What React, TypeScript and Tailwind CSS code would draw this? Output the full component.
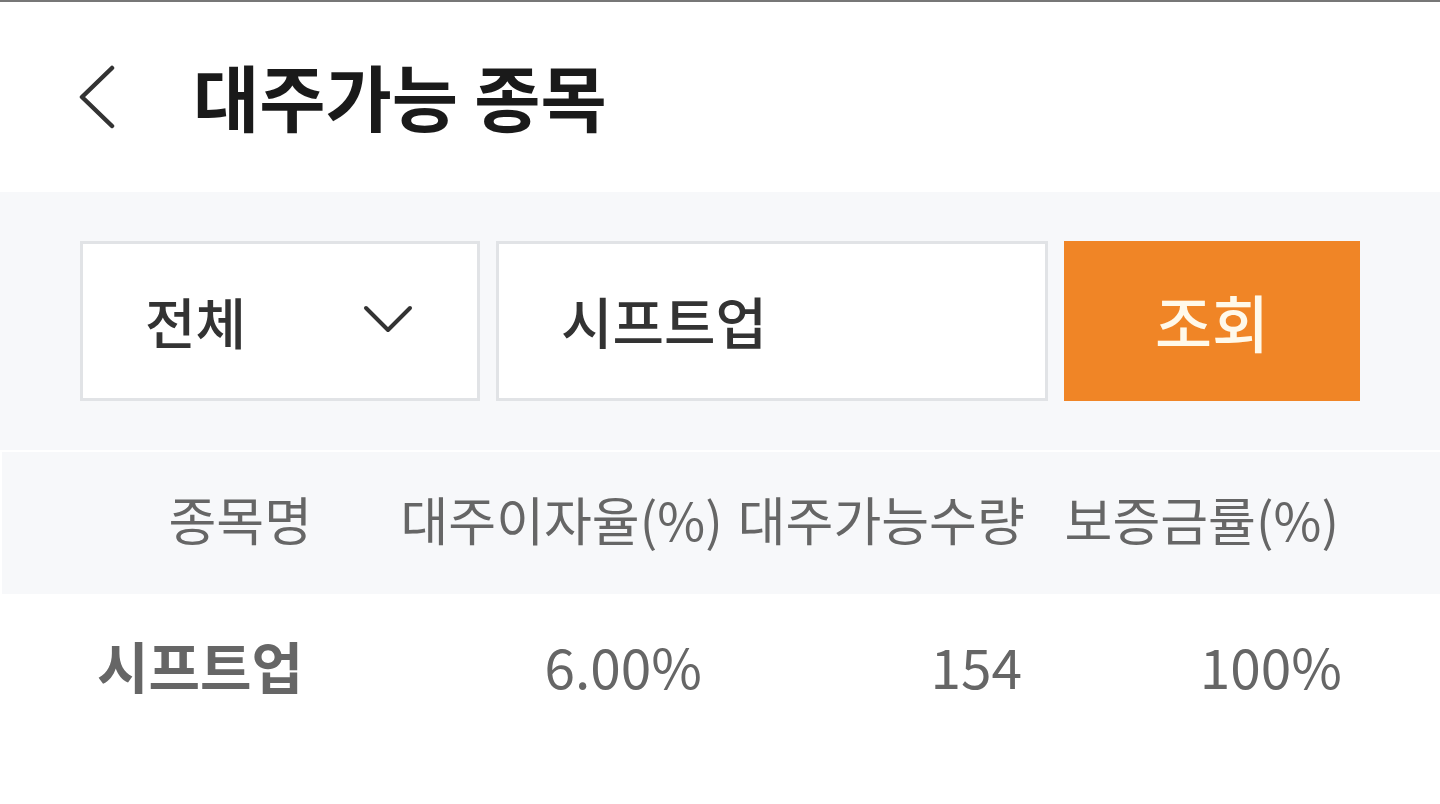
const font = { fontFamily: '"Noto Sans CJK KR", "Noto Sans", sans-serif' };

function BackIcon() {
  return (
    <svg width="40" height="64" viewBox="0 0 40 64" fill="none">
      <path d="M34 3L4 32L34 61" stroke="#333" strokeWidth="4.5" strokeLinecap="round" strokeLinejoin="round" />
    </svg>
  );
}

function ChevronDown() {
  return (
    <svg width="50" height="30" viewBox="0 0 50 30" fill="none">
      <path d="M3 4L25 26L47 4" stroke="#333" strokeWidth="4" strokeLinecap="round" strokeLinejoin="round" />
    </svg>
  );
}

const rows = [{ name: '시프트업', rate: '6.00%', qty: '154', margin: '100%' }];

export default function App() {
  return (
    <div className="w-[1440px] h-[804px] bg-white overflow-hidden" style={font}>
      <div className="h-[2px] bg-[#777]" />
      <header className="h-[190px] flex items-center pl-[78px]">
        <BackIcon />
        <h1 className="ml-[75px] text-[72px] font-bold text-[#1a1a1a] leading-none -mt-[4px]">대주가능 종목</h1>
      </header>

      <section className="bg-[#f7f8fa] px-[80px] py-[49px]">
        <div className="flex gap-4 h-[160px]">
          <div className="w-[400px] bg-white border-[3px] border-[#e1e3e6] flex items-center justify-between pl-[62px] pr-[64px]">
            <span className="text-[55px] font-medium text-[#333] leading-none -mt-[2px]">전체</span>
            <span className="-mt-[4px]">
              <ChevronDown />
            </span>
          </div>
          <div className="flex-1 bg-white border-[3px] border-[#e1e3e6] flex items-center pl-[62px]">
            <span className="text-[56px] font-medium text-[#333] leading-none -mt-[2px]">시프트업</span>
          </div>
          <button className="w-[296px] bg-[#f08526] flex items-center justify-center text-[62px] font-medium text-[#fff9ea] leading-none">
            조회
          </button>
        </div>
      </section>

      <div className="h-[2px] bg-white" />

      <div className="ml-[2px] bg-[#f7f8fa] h-[142px] px-[78px] grid grid-cols-4 items-center text-[52px] text-[#666] leading-none">
        <div className="text-center -mt-[8px]">종목명</div>
        <div className="text-center whitespace-nowrap -mt-[8px]">대주이자율(%)</div>
        <div className="text-center whitespace-nowrap -mt-[8px]">대주가능수량</div>
        <div className="text-center whitespace-nowrap -mt-[8px]">보증금률(%)</div>
      </div>

      {rows.map((r) => (
        <div key={r.name} className="h-[152px] px-[80px] grid grid-cols-4 items-center text-[55px] text-[#666] leading-none">
          <div className="pl-[17px] font-bold text-[56px] -mt-[10px]">{r.name}</div>
          <div className="text-right pr-[18px] -mt-[10px]">{r.rate}</div>
          <div className="text-right pr-[18px] -mt-[10px]">{r.qty}</div>
          <div className="text-right pr-[18px] -mt-[10px]">{r.margin}</div>
        </div>
      ))}
    </div>
  );
}
